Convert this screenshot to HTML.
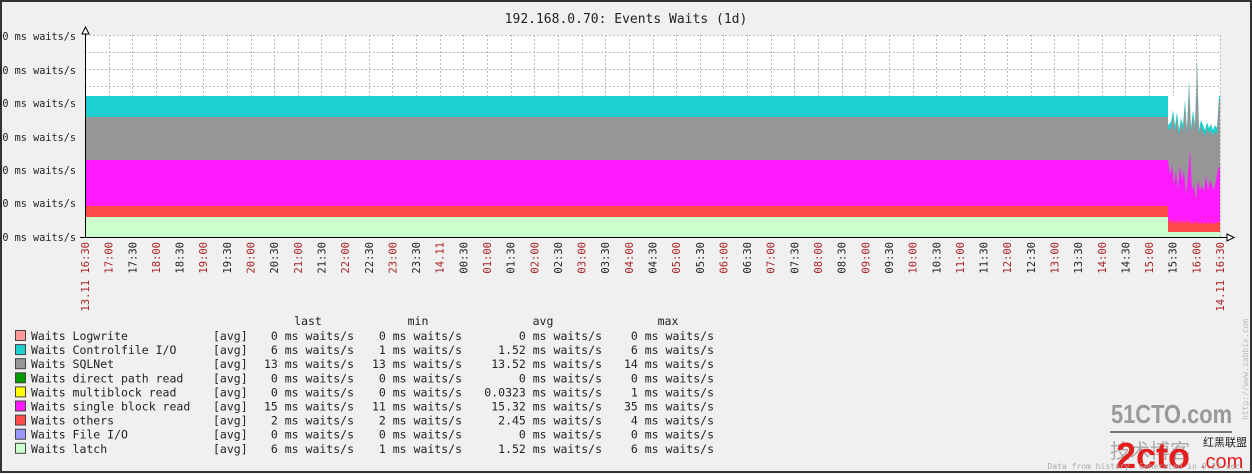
<!DOCTYPE html>
<html><head><meta charset="utf-8"><style>
html,body{margin:0;padding:0;background:#f0f0f0;}
svg{display:block;}
text{font-family:"DejaVu Sans Mono","Liberation Mono",monospace;}
</style></head><body>
<svg width="1252" height="474" viewBox="0 0 1252 474" xmlns="http://www.w3.org/2000/svg">
<rect x="0" y="0" width="1252" height="474" fill="#f0f0f0"/>
<rect x="1" y="1" width="1250" height="471" fill="none" stroke="#333" stroke-width="2"/>
<text x="626" y="23" font-size="13" text-anchor="middle" fill="#222">192.168.0.70: Events Waits (1d)</text>
<rect x="85" y="35" width="1135" height="202" fill="#fff"/>
<rect x="85" y="96" width="1083" height="21" fill="#1ecfd0"/>
<rect x="85" y="117" width="1083" height="43" fill="#969696"/>
<rect x="85" y="160" width="1083" height="46" fill="#ff1aff"/>
<rect x="85" y="206" width="1083" height="11" fill="#ff4a4a"/>
<rect x="85" y="217" width="1083" height="20" fill="#ccffcc"/>
<polygon fill="#1ecfd0" points="1168,96 1168,125 1171,122 1173,110 1175,126 1177,112 1179,130 1181,118 1183,125 1185,100 1187,130 1189,80 1191,128 1193,110 1195,125 1197,58 1199,130 1201,120 1203,125 1205,130 1207,122 1209,128 1211,124 1213,130 1215,125 1217,128 1219,96 1220,96 1220,237 1168,237"/>
<polygon fill="#969696" points="1168,130 1171,128 1173,115 1175,132 1177,118 1179,136 1181,124 1183,131 1185,105 1187,134 1189,85 1191,133 1193,116 1195,130 1197,62 1199,135 1201,126 1203,132 1205,136 1207,128 1209,134 1211,130 1213,136 1215,132 1217,134 1219,100 1220,100 1220,237 1168,237"/>
<polygon fill="#ff1aff" points="1168,160 1170,175 1172,165 1174,185 1176,170 1178,190 1180,165 1182,180 1184,170 1186,195 1188,175 1190,150 1192,190 1194,185 1196,200 1198,180 1200,190 1202,185 1204,192 1206,175 1208,190 1210,180 1212,185 1214,190 1216,180 1218,170 1220,165 1220,237 1168,237"/>
<polygon fill="#ff4a4a" points="1168,218 1170,223 1172,219 1174,224 1176,220 1178,224 1180,219 1182,224 1184,220 1186,224 1188,219 1190,224 1192,222 1194,224 1196,221 1198,224 1200,222 1202,224 1204,222 1206,224 1208,222 1210,224 1212,222 1214,224 1216,223 1218,222 1220,222 1220,237 1168,237"/>
<polygon fill="#ccffcc" points="1168,232 1220,232 1220,237 1168,237"/>
<g stroke="#b8b8b8" stroke-width="1" stroke-dasharray="2,2">
<line x1="85" y1="35.5" x2="1220" y2="35.5"/>
<line x1="85" y1="52.5" x2="1220" y2="52.5"/>
<line x1="85" y1="69.5" x2="1220" y2="69.5"/>
<line x1="85" y1="86.5" x2="1220" y2="86.5"/>
<line x1="1220.5" y1="35" x2="1220.5" y2="237"/>
</g>
<g stroke="#b8b8b8" stroke-width="1" stroke-dasharray="2,2" id="vg"></g>
<line x1="85.5" y1="28" x2="85.5" y2="238" stroke="#000"/>
<polygon points="82,34 85.5,27 89,34" fill="#fff" stroke="#000"/>
<line x1="80" y1="237.5" x2="1228" y2="237.5" stroke="#000"/>
<polygon points="1227,234 1234,237.5 1227,241" fill="#fff" stroke="#000"/>
<g font-size="10.2" text-anchor="end" fill="#222">
<text x="76" y="40">60 ms waits/s</text>
<text x="76" y="74">50 ms waits/s</text>
<text x="76" y="107">40 ms waits/s</text>
<text x="76" y="141">30 ms waits/s</text>
<text x="76" y="174">20 ms waits/s</text>
<text x="76" y="207">10 ms waits/s</text>
<text x="76" y="241">0 ms waits/s</text>
</g>
<g id="xl" font-size="10.5"></g>
<g font-size="11.5" fill="#222">
<text x="308" y="325" text-anchor="middle">last</text>
<text x="418" y="325" text-anchor="middle">min</text>
<text x="543" y="325" text-anchor="middle">avg</text>
<text x="668" y="325" text-anchor="middle">max</text>
</g>
<g id="leg" font-size="11.5" fill="#222"></g>
<text transform="translate(1248,420) rotate(-90)" font-size="8" fill="#bbb">http://www.zabbix.com</text>
<text x="1111" y="423" font-size="26" font-weight="bold" fill="#999" textLength="121" lengthAdjust="spacingAndGlyphs" style="font-family:'Liberation Sans',sans-serif">51CTO.com</text>
<line x1="1110" y1="432" x2="1232" y2="432" stroke="#777" stroke-width="2"/>
<text x="1110" y="458" font-size="20" fill="#aaa" style="font-family:'Noto Sans CJK SC',sans-serif">技术博客</text>
<text x="1116" y="468" font-size="36" font-weight="bold" fill="#e41e1e" style="font-family:'Liberation Sans',sans-serif">2cto</text>
<text x="1200" y="468" font-size="20" fill="#e41e1e" style="font-family:'Liberation Sans',sans-serif">.com</text>
<text x="1203" y="446" font-size="11" fill="#222" style="font-family:'Noto Sans CJK SC',sans-serif">红黑联盟</text>
<text x="1245" y="469" font-size="8" fill="#aaa" text-anchor="end">Data from history. Generated in 0.23 sec.</text>
<script>
var ns="http://www.w3.org/2000/svg";
var vg=document.getElementById('vg'),xl=document.getElementById('xl');
var step=1135/48;
for(var i=0;i<=48;i++){
 var x=85+i*step;
 if(i>0&&i<48){var l=document.createElementNS(ns,'line');l.setAttribute('x1',Math.round(x)+.5);l.setAttribute('x2',Math.round(x)+.5);l.setAttribute('y1',35);l.setAttribute('y2',96);vg.appendChild(l);}
 var m=(16*60+30+i*30)%1440;var h=Math.floor(m/60),mm=m%60;
 var s=(h<10?'0':'')+h+':'+(mm?'30':'00');
 var red=(mm==0)||i==0||i==48;
 if(i==0)s='13.11 16:30';if(i==48)s='14.11 16:30';if(i==15)s='14.11';
 var t=document.createElementNS(ns,'text');
 t.setAttribute('transform','translate('+(x+4)+',242) rotate(-90)');
 t.setAttribute('text-anchor','end');
 t.setAttribute('fill',red?'#aa2222':'#222');
 t.textContent=s;xl.appendChild(t);
}
var rows=[["#ff9999","Waits Logwrite","0","0","0","0"],["#1ecfd0","Waits Controlfile I/O","6","1","1.52","6"],["#969696","Waits SQLNet","13","13","13.52","14"],["#009900","Waits direct path read","0","0","0","0"],["#ffff00","Waits multiblock read","0","0","0.0323","1"],["#ff1aff","Waits single block read","15","11","15.32","35"],["#ff4a4a","Waits others","2","2","2.45","4"],["#9999ff","Waits File I/O","0","0","0","0"],["#ccffcc","Waits latch","6","1","1.52","6"]];
var lg=document.getElementById('leg');
rows.forEach(function(r,k){
 var y=340+k*14.1;
 var rc=document.createElementNS(ns,'rect');rc.setAttribute('x',15.5);rc.setAttribute('y',y-9.5);rc.setAttribute('width',10);rc.setAttribute('height',10);rc.setAttribute('fill',r[0]);rc.setAttribute('stroke','#444');lg.appendChild(rc);
 function tx(x,s,a){var t=document.createElementNS(ns,'text');t.setAttribute('x',x);t.setAttribute('y',y);if(a)t.setAttribute('text-anchor',a);t.textContent=s;lg.appendChild(t);}
 tx(31,r[1]);tx(213,'[avg]');
 tx(354,r[2]+' ms waits/s','end');tx(462,r[3]+' ms waits/s','end');tx(602,r[4]+' ms waits/s','end');tx(714,r[5]+' ms waits/s','end');
});
</script>
</svg>
</body></html>
